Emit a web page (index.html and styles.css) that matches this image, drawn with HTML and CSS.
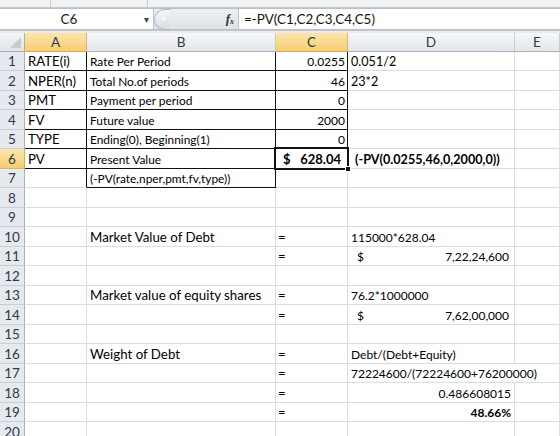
FILE: index.html
```html
<!DOCTYPE html>
<html lang="en">
<head>
    <meta charset="UTF-8">
    <title>Book1 - PV</title>
    <link rel="stylesheet" href="styles.css">
</head>
<body>
    <div class="ribbon-edge">
        <span class="sep s1"></span>
        <span class="sep s2"></span>
    </div>
    <div class="formula-bar">
        <div class="name-box">
            <span class="cell-ref">C6</span>
            <span class="drop">&#9662;</span>
        </div>
        <div class="fbtns">
            <span class="groove"><span class="knob"></span></span>
            <span class="fx">f<sub>x</sub></span>
        </div>
        <div class="finput">=-PV(C1,C2,C3,C4,C5)</div>
    </div>

    <div class="sheet">
        <div class="row head">
            <div class="corner"><span class="tri"></span></div>
            <div class="ch on">A</div>
            <div class="ch">B</div>
            <div class="ch on">C</div>
            <div class="ch">D</div>
            <div class="ch">E</div>
        </div>

        <div class="row">
            <div class="rh">1</div>
            <div class="c big bx">RATE(i)</div>
            <div class="c sm bx">Rate Per Period</div>
            <div class="c num bx">0.0255</div>
            <div class="c mid">0.051/2</div>
            <div class="c"></div>
        </div>
        <div class="row">
            <div class="rh">2</div>
            <div class="c big bx">NPER(n)</div>
            <div class="c sm bx">Total No.of periods</div>
            <div class="c num bx">46</div>
            <div class="c mid">23*2</div>
            <div class="c"></div>
        </div>
        <div class="row">
            <div class="rh">3</div>
            <div class="c big bx">PMT</div>
            <div class="c sm bx">Payment per period</div>
            <div class="c num bx">0</div>
            <div class="c"></div>
            <div class="c"></div>
        </div>
        <div class="row">
            <div class="rh">4</div>
            <div class="c big bx">FV</div>
            <div class="c sm bx">Future value</div>
            <div class="c num bx">2000</div>
            <div class="c"></div>
            <div class="c"></div>
        </div>
        <div class="row">
            <div class="rh">5</div>
            <div class="c big bx">TYPE</div>
            <div class="c sm bx">Ending(0), Beginning(1)</div>
            <div class="c num bx">0</div>
            <div class="c"></div>
            <div class="c"></div>
        </div>
        <div class="row">
            <div class="rh on">6</div>
            <div class="c big bx">PV</div>
            <div class="c sm bx">Present Value</div>
            <div class="c acct bold bx active"><span>$</span><span>628.04</span></div>
            <div class="c mid bold pv-note">(-PV(0.0255,46,0,2000,0))</div>
            <div class="c"></div>
        </div>
        <div class="row">
            <div class="rh">7</div>
            <div class="c br"></div>
            <div class="c sm bx">(-PV(rate,nper,pmt,fv,type))</div>
            <div class="c"></div>
            <div class="c"></div>
            <div class="c"></div>
        </div>
        <div class="row">
            <div class="rh">8</div>
            <div class="c"></div><div class="c"></div><div class="c"></div><div class="c"></div><div class="c"></div>
        </div>
        <div class="row">
            <div class="rh">9</div>
            <div class="c"></div><div class="c"></div><div class="c"></div><div class="c"></div><div class="c"></div>
        </div>
        <div class="row">
            <div class="rh">10</div>
            <div class="c"></div>
            <div class="c lbl">Market Value of Debt</div>
            <div class="c eq">=</div>
            <div class="c val">115000*628.04</div>
            <div class="c"></div>
        </div>
        <div class="row">
            <div class="rh">11</div>
            <div class="c"></div>
            <div class="c"></div>
            <div class="c eq">=</div>
            <div class="c val acct money"><span>$</span><span>7,22,24,600</span></div>
            <div class="c"></div>
        </div>
        <div class="row">
            <div class="rh">12</div>
            <div class="c"></div><div class="c"></div><div class="c"></div><div class="c"></div><div class="c"></div>
        </div>
        <div class="row">
            <div class="rh">13</div>
            <div class="c"></div>
            <div class="c lbl">Market value of equity shares</div>
            <div class="c eq">=</div>
            <div class="c val">76.2*1000000</div>
            <div class="c"></div>
        </div>
        <div class="row">
            <div class="rh">14</div>
            <div class="c"></div>
            <div class="c"></div>
            <div class="c eq">=</div>
            <div class="c val acct money"><span>$</span><span>7,62,00,000</span></div>
            <div class="c"></div>
        </div>
        <div class="row">
            <div class="rh">15</div>
            <div class="c"></div><div class="c"></div><div class="c"></div><div class="c"></div><div class="c"></div>
        </div>
        <div class="row">
            <div class="rh">16</div>
            <div class="c"></div>
            <div class="c lbl">Weight of Debt</div>
            <div class="c eq">=</div>
            <div class="c val">Debt/(Debt+Equity)</div>
            <div class="c"></div>
        </div>
        <div class="row">
            <div class="rh">17</div>
            <div class="c"></div>
            <div class="c"></div>
            <div class="c eq">=</div>
            <div class="c val spill">72224600/(72224600+76200000)</div>
            <div class="c"></div>
        </div>
        <div class="row">
            <div class="rh">18</div>
            <div class="c"></div>
            <div class="c"></div>
            <div class="c eq">=</div>
            <div class="c val right">0.486608015</div>
            <div class="c"></div>
        </div>
        <div class="row">
            <div class="rh">19</div>
            <div class="c"></div>
            <div class="c"></div>
            <div class="c eq">=</div>
            <div class="c val right bold">48.66%</div>
            <div class="c"></div>
        </div>
        <div class="row">
            <div class="rh">20</div>
            <div class="c"></div><div class="c"></div><div class="c"></div><div class="c"></div><div class="c"></div>
        </div>
    </div>
</body>
</html>
```
FILE: styles.css
```css
*,
*::before,
*::after {
    box-sizing: border-box;
}
body {
    margin: 0;
    background: #e8ebef;
    font-family: Lato, "Liberation Sans", sans-serif;
    color: #000;
    overflow: hidden;
}

/* strip left over from the ribbon */
.ribbon-edge {
    height: 8px;
    background: #f1f2f4;
    border-bottom: 1px solid #c3c8cf;
    position: relative;
}
.ribbon-edge .sep {
    position: absolute;
    top: 0;
    bottom: 0;
    width: 1px;
    background: #c9ced5;
}
.ribbon-edge .s1 { left: 50px; }
.ribbon-edge .s2 { left: 147px; }

/* formula bar */
.formula-bar {
    display: flex;
    height: 23px;
    background: #e8ebef;
    border-bottom: 1px solid #c3c8cf;
}
.name-box {
    width: 154px;
    background: #fff;
    border: 1px solid #b9c0c9;
    border-left: 0;
    display: flex;
    align-items: center;
    font-size: 13.5px;
    color: #222;
}
.cell-ref {
    flex: 1;
    text-align: center;
    padding-right: 3px;
}
.drop {
    font-size: 10px;
    color: #444;
    width: 10px;
    text-align: center;
    margin-right: 2px;
}
.fbtns {
    width: 84px;
    display: flex;
    align-items: center;
    background: linear-gradient(#eef0f3, #dfe3e8);
    border-top: 1px solid #b9c0c9;
    border-bottom: 1px solid #b9c0c9;
}
.groove {
    width: 16px;
    height: 21px;
    border: 1px solid #b4bbc4;
    border-right: 0;
    border-radius: 11px 0 0 11px;
    background: linear-gradient(#f6f7f9, #d8dde3);
    display: flex;
    align-items: center;
    justify-content: center;
}
.knob {
    width: 7px;
    height: 7px;
    border-radius: 50%;
    background: radial-gradient(circle at 40% 35%, #fff, #cfd4da);
    margin-left: 4px;
}
.fx {
    margin-left: auto;
    margin-right: 4px;
    font-family: "Liberation Serif", serif;
    font-style: italic;
    font-weight: bold;
    font-size: 13px;
    color: #333;
}
.fx sub {
    font-size: 8px;
    vertical-align: -1px;
}
.finput {
    flex: 1;
    background: #fff;
    border: 1px solid #b9c0c9;
    border-right: 0;
    display: flex;
    align-items: center;
    padding-left: 5px;
    font-size: 13.4px;
    color: #111;
}

/* worksheet */
.sheet {
    margin-top: 2px;
    background: #fff;
}
.row {
    display: grid;
    grid-template-columns: 25px 62px 189px 72px 167px 1fr;
    height: 20px;
}
.row:nth-child(even) {
    height: 19px;
}
.row.head {
    height: 19px;
}
.corner {
    background: linear-gradient(#f3f4f6, #e1e4e8);
    border-right: 1px solid #a9b1bc;
    border-bottom: 1px solid #a9b1bc;
    position: relative;
}
.corner .tri {
    position: absolute;
    right: 3px;
    bottom: 3px;
    width: 0;
    height: 0;
    border-left: 11px solid transparent;
    border-bottom: 11px solid #c7ccd3;
}
.ch {
    background: linear-gradient(#f7f8f9, #e3e6ea);
    border-right: 1px solid #c6ccd3;
    border-bottom: 1px solid #a9b1bc;
    display: flex;
    align-items: center;
    justify-content: center;
    font-size: 13.5px;
    color: #2f3a48;
}
.ch.on {
    background: linear-gradient(#fbe6ad, #f6cd72);
    border-bottom-color: #e9a847;
    border-right-color: #e3b35b;
}
.rh {
    background: #e6e9ee;
    border-right: 1px solid #a9b1bc;
    border-bottom: 1px solid #c9ced6;
    display: flex;
    align-items: center;
    justify-content: center;
    font-size: 13.5px;
    color: #2f3a48;
}
.rh.on {
    background: linear-gradient(#fbe6ad, #f6cd72);
    border-bottom-color: #e3b35b;
    border-right-color: #e9a847;
}

.c {
    border-right: 1px solid #dadcdf;
    border-bottom: 1px solid #dadcdf;
    display: flex;
    align-items: flex-end;
    white-space: nowrap;
    padding: 0 2px 0 3px;
    font-size: 13px;
    line-height: 17px;
    position: relative;
}
.c.bx {
    border-right-color: #111;
    border-bottom-color: #111;
}
.c.br {
    border-right-color: #111;
}
.big {
    font-size: 13.2px;
}
.sm {
    font-size: 11.9px;
}
.num {
    justify-content: flex-end;
    font-size: 12px;
}
.mid {
    font-size: 12.6px;
}
.bold {
    font-weight: bold;
}
.pv-note {
    padding-left: 7px;
}
.acct {
    justify-content: space-between;
}
.active {
    padding: 0 6px 0 7px;
}
.active::after {
    content: "";
    position: absolute;
    left: -2px;
    top: -2px;
    right: -2px;
    bottom: -2px;
    border: 2px solid #111;
}
.active::before {
    content: "";
    position: absolute;
    right: -4px;
    bottom: -4px;
    width: 6px;
    height: 6px;
    background: #111;
    border: 1px solid #fff;
    z-index: 1;
}
.lbl {
    font-size: 13.3px;
}
.eq {
    font-size: 13px;
    padding-left: 2px;
}
.val {
    font-size: 12px;
}
.money {
    padding: 0 5px 0 9px;
}
.right {
    justify-content: flex-end;
    padding-right: 3px;
}
.spill {
    border-right-color: transparent;
    z-index: 1;
}
```
